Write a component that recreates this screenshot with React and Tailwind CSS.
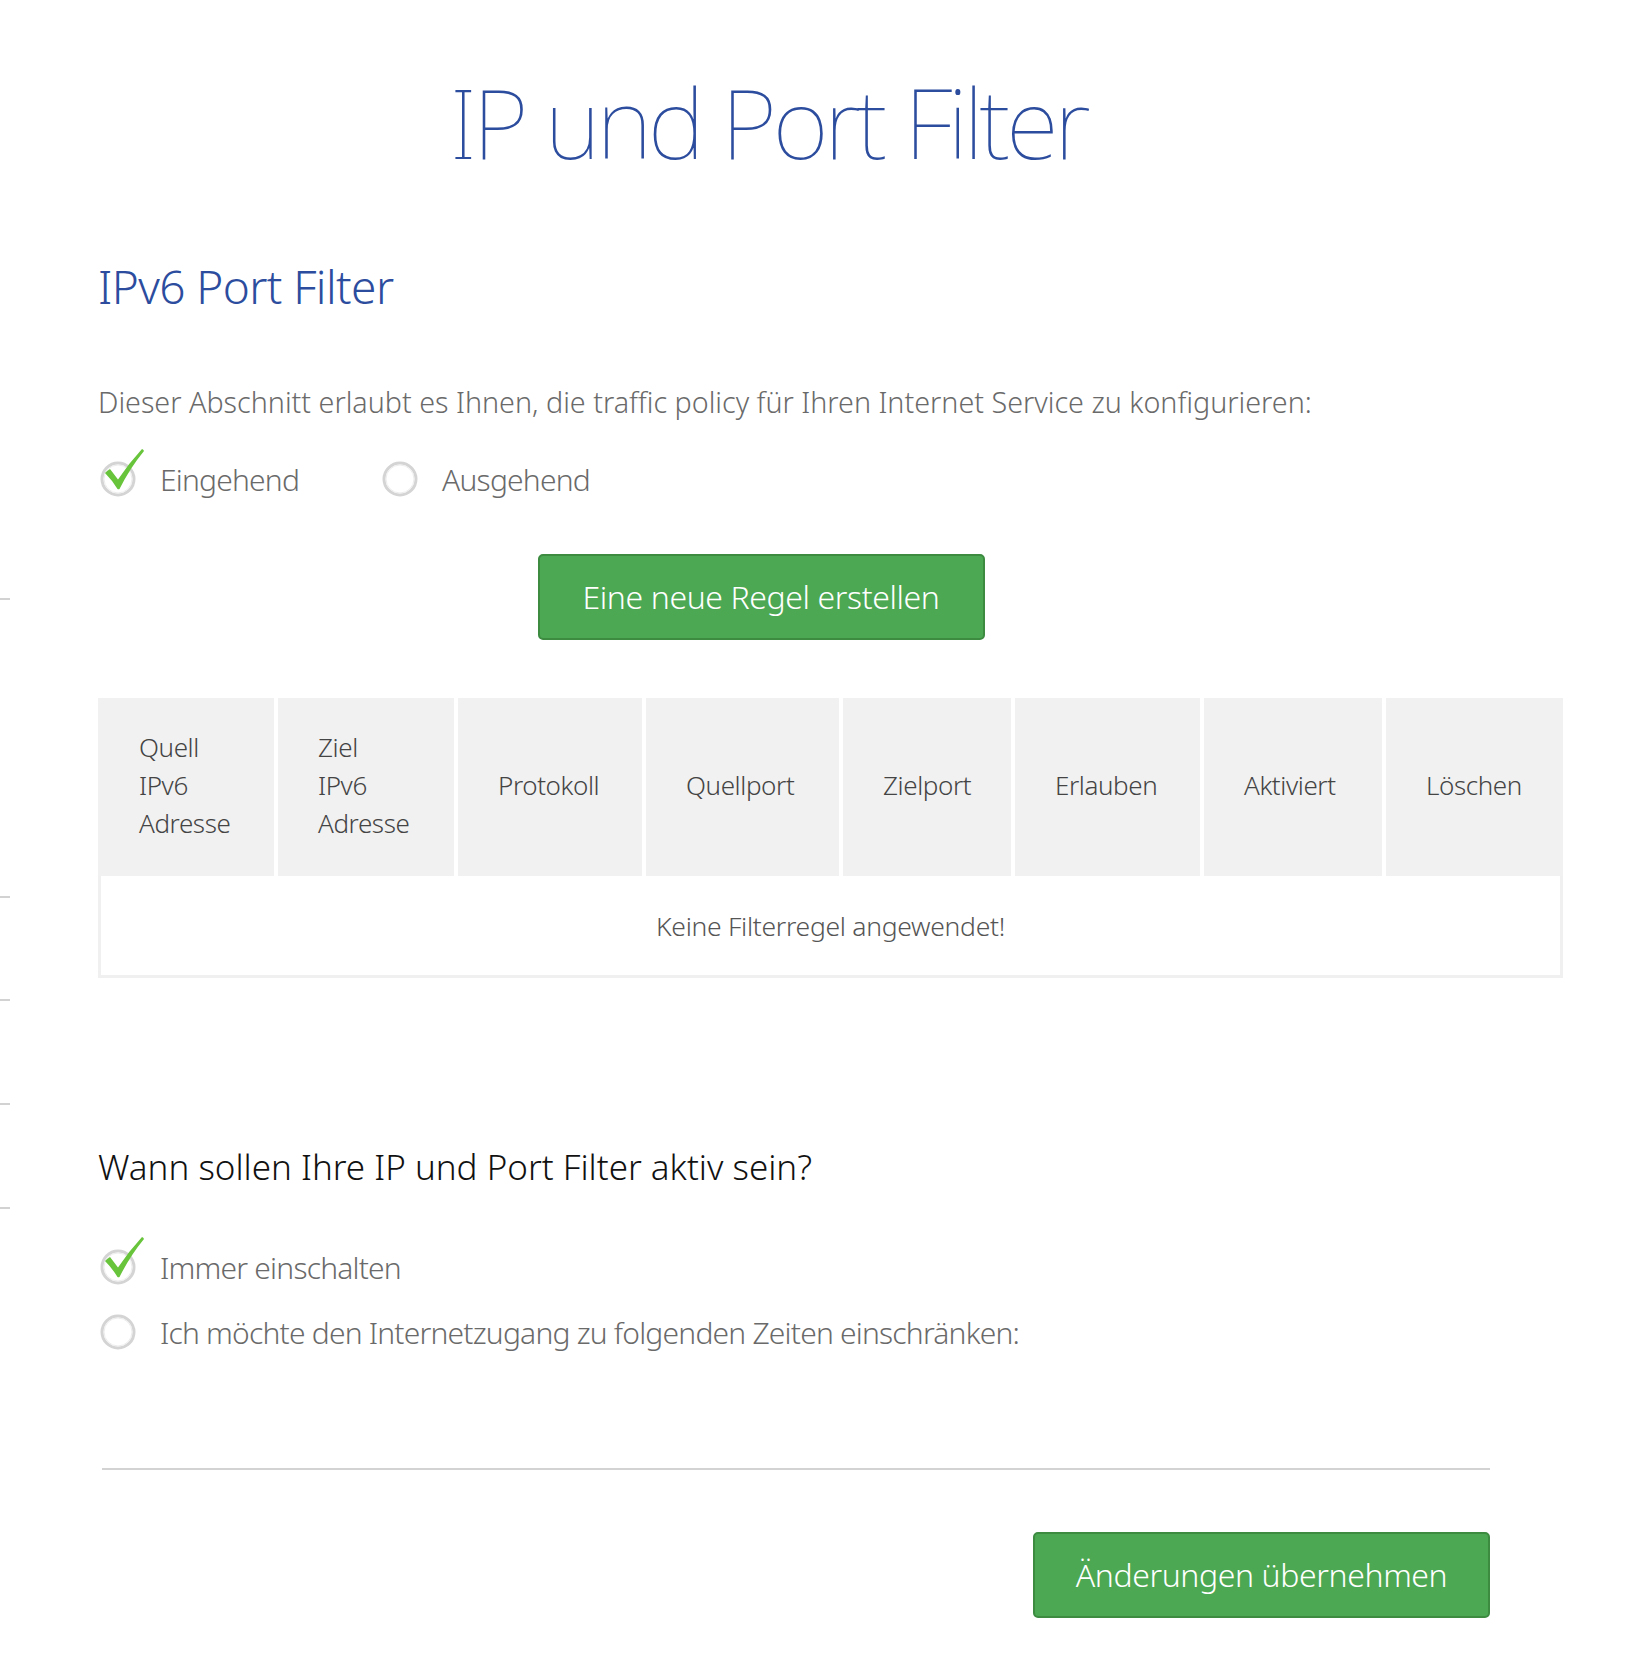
const FONT = "font-['Noto_Sans',sans-serif]";

function RadioMark({ checked }) {
  return (
    <svg width="46" height="50" viewBox="0 0 46 50" className="shrink-0">
      <circle cx="19" cy="31" r="16" fill="#fff" stroke="#d4d4d4" strokeWidth="3" />
      <circle cx="19" cy="31" r="14" fill="none" stroke="#ededed" strokeWidth="1" />
      {checked && (
        <path
          d="M6 25 Q8.5 22.5 11 21 L19 31.5 Q30 15 43 1 Q44.5 1.5 45 3 Q31 20 20.5 41 Q19.5 41.5 18.5 41 Q13 32 6 25 Z"
          fill="#67c43b"
        />
      )}
    </svg>
  );
}

function Option({ checked, label, className = '' }) {
  return (
    <div className={`flex items-start ${className}`}>
      <RadioMark checked={checked} />
      <span className="ml-[15px] mt-[12px] text-[30px] leading-[40px] font-light tracking-[-0.8px] text-[#6a6a6a] whitespace-nowrap">
        {label}
      </span>
    </div>
  );
}

const COLUMNS = [
  { w: 'w-[176px]', label: ['Quell', 'IPv6', 'Adresse'] },
  { w: 'w-[180px]', label: ['Ziel', 'IPv6', 'Adresse'] },
  { w: 'w-[188px]', label: ['Protokoll'] },
  { w: 'w-[197px]', label: ['Quellport'] },
  { w: 'w-[172px]', label: ['Zielport'] },
  { w: 'w-[189px]', label: ['Erlauben'] },
  { w: 'w-[182px]', label: ['Aktiviert'] },
  { w: 'w-[181px]', label: ['Löschen'] },
];

function RuleTable() {
  return (
    <div className="w-[1465px]">
      <div className="flex h-[178px] bg-white">
        {COLUMNS.map((c, i) => (
          <div
            key={i}
            className={`${c.w} flex flex-col justify-center bg-[#f1f1f1] pb-[4px] text-[26px] leading-[38px] font-light tracking-[-0.4px] text-[#444] ${
              i > 0 ? 'border-l-4 border-white pl-[40px]' : 'pl-[41px]'
            }`}
          >
            {c.label.map((l) => (
              <span key={l}>{l}</span>
            ))}
          </div>
        ))}
      </div>
      <div className="flex h-[102px] items-center justify-center border-x-[3px] border-b-[3px] border-[#f0f0f0] text-[26.5px] leading-[36px] font-light tracking-[-0.3px] text-[#555]">
        Keine Filterregel angewendet!
      </div>
    </div>
  );
}

function GreenButton({ children, className = '' }) {
  return (
    <button
      type="button"
      className={`h-[86px] rounded-[5px] border-2 border-[#3c8b41] bg-[#4ca852] text-[32px] leading-[40px] font-light tracking-[-0.4px] text-white ${className}`}
    >
      {children}
    </button>
  );
}

export default function App() {
  return (
    <div className={`${FONT} flex min-h-[1674px] w-[1640px] bg-white`}>
      {/* ticks peeking in from the left edge */}
      <div className="flex w-[10px] shrink-0 flex-col pt-[598px]">
        <div className="h-[2px] bg-[#d2d2d2]" />
        <div className="mt-[296px] h-[2px] bg-[#d2d2d2]" />
        <div className="mt-[101px] h-[2px] bg-[#d2d2d2]" />
        <div className="mt-[102px] h-[2px] bg-[#d2d2d2]" />
        <div className="mt-[102px] h-[2px] bg-[#d2d2d2]" />
      </div>

      <div className="flex flex-col pl-[88px] pt-[73px]">
        <h1 className="w-[1340px] text-center text-[97px] leading-[97px] font-thin tracking-[-4.2px] text-[#2c4c9e]">
          IP und Port Filter
        </h1>

        <h2 className="mt-[92px] text-[46px] leading-[48px] font-light tracking-[-0.6px] text-[#2c4c9e]">
          IPv6 Port Filter
        </h2>

        <p className="mt-[74px] text-[28.7px] leading-[36px] font-light text-[#6a6a6a] whitespace-nowrap">
          Dieser Abschnitt erlaubt es Ihnen, die traffic policy für Ihren Internet Service zu konfigurieren:
        </p>

        <div className="mt-[28px] ml-[1px] flex">
          <Option checked label="Eingehend" />
          <Option label="Ausgehend" className="ml-[82px]" />
        </div>

        <div className="mt-[54px] flex w-[1340px] justify-center">
          <GreenButton className="mr-[14px] w-[447px]">Eine neue Regel erstellen</GreenButton>
        </div>

        <div className="mt-[58px]">
          <RuleTable />
        </div>

        <h3 className="mt-[167px] text-[35px] leading-[44px] font-light text-[#111]">
          Wann sollen Ihre IP und Port Filter aktiv sein?
        </h3>

        <div className="mt-[47px] ml-[1px] flex flex-col gap-[13px]">
          <Option checked label="Immer einschalten" />
          <Option label="Ich möchte den Internetzugang zu folgenden Zeiten einschränken:" />
        </div>

        <div className="ml-[4px] mt-[115px] flex w-[1388px] flex-col items-end">
          <div className="h-[2px] w-full bg-[#d3d3d3]" />
          <GreenButton className="mt-[62px] w-[457px]">Änderungen übernehmen</GreenButton>
        </div>
      </div>
    </div>
  );
}
